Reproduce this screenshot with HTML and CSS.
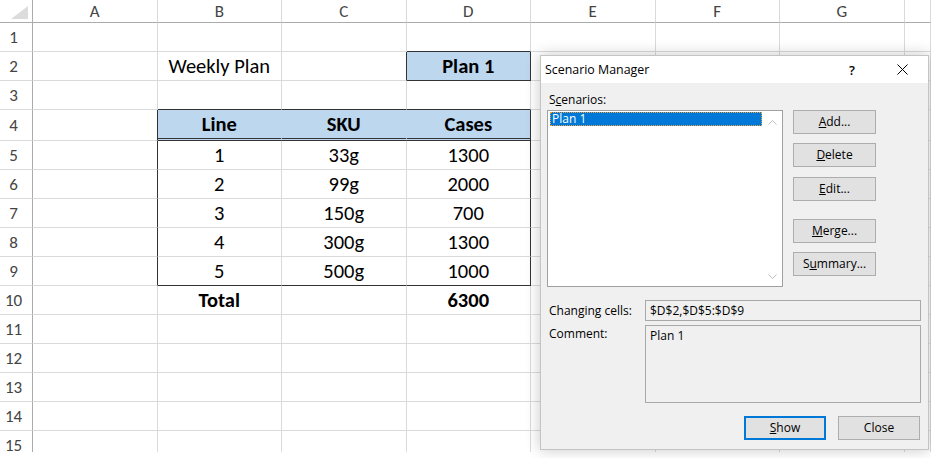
FILE: index.html
```html
<!DOCTYPE html>
<html>
<head>
<meta charset="utf-8">
<link rel="stylesheet" href="styles.css">
</head>
<body>
<div class="sheet">
  <div class="c corner"><svg width="32" height="22" viewBox="0 0 32 22"><polygon points="28,6 28,19 11,19" fill="#dcdcdc"/></svg></div>
  <div class="c ch">A</div><div class="c ch">B</div><div class="c ch">C</div><div class="c ch">D</div><div class="c ch">E</div><div class="c ch">F</div><div class="c ch">G</div><div class="c ch"></div>

  <div class="c rh">1</div><div class="c"></div><div class="c"></div><div class="c"></div><div class="c dk-b"></div><div class="c"></div><div class="c"></div><div class="c"></div><div class="c"></div>

  <div class="c rh">2</div><div class="c"></div><div class="c">Weekly Plan</div><div class="c dk-r"></div><div class="c fill b dk-r dk-b">Plan 1</div><div class="c"></div><div class="c"></div><div class="c"></div><div class="c"></div>

  <div class="c rh">3</div><div class="c"></div><div class="c dk-b"></div><div class="c dk-b"></div><div class="c dk-b"></div><div class="c"></div><div class="c"></div><div class="c"></div><div class="c"></div>

  <div class="c rh">4</div><div class="c dk-r"></div><div class="c hdr fill-r">Line</div><div class="c hdr fill-r">SKU</div><div class="c hdr dk-r">Cases</div><div class="c"></div><div class="c"></div><div class="c"></div><div class="c"></div>

  <div class="c rh">5</div><div class="c dk-r"></div><div class="c">1</div><div class="c">33g</div><div class="c dk-r">1300</div><div class="c"></div><div class="c"></div><div class="c"></div><div class="c"></div>

  <div class="c rh">6</div><div class="c dk-r"></div><div class="c">2</div><div class="c">99g</div><div class="c dk-r">2000</div><div class="c"></div><div class="c"></div><div class="c"></div><div class="c"></div>

  <div class="c rh">7</div><div class="c dk-r"></div><div class="c">3</div><div class="c">150g</div><div class="c dk-r">700</div><div class="c"></div><div class="c"></div><div class="c"></div><div class="c"></div>

  <div class="c rh">8</div><div class="c dk-r"></div><div class="c">4</div><div class="c">300g</div><div class="c dk-r">1300</div><div class="c"></div><div class="c"></div><div class="c"></div><div class="c"></div>

  <div class="c rh">9</div><div class="c dk-r"></div><div class="c dk-b">5</div><div class="c dk-b">500g</div><div class="c dk-r dk-b">1000</div><div class="c"></div><div class="c"></div><div class="c"></div><div class="c"></div>

  <div class="c rh">10</div><div class="c"></div><div class="c b">Total</div><div class="c"></div><div class="c b">6300</div><div class="c"></div><div class="c"></div><div class="c"></div><div class="c"></div>

  <div class="c rh">11</div><div class="c"></div><div class="c"></div><div class="c"></div><div class="c"></div><div class="c"></div><div class="c"></div><div class="c"></div><div class="c"></div>

  <div class="c rh">12</div><div class="c"></div><div class="c"></div><div class="c"></div><div class="c"></div><div class="c"></div><div class="c"></div><div class="c"></div><div class="c"></div>

  <div class="c rh">13</div><div class="c"></div><div class="c"></div><div class="c"></div><div class="c"></div><div class="c"></div><div class="c"></div><div class="c"></div><div class="c"></div>

  <div class="c rh">14</div><div class="c"></div><div class="c"></div><div class="c"></div><div class="c"></div><div class="c"></div><div class="c"></div><div class="c"></div><div class="c"></div>

  <div class="c rh">15</div><div class="c"></div><div class="c"></div><div class="c"></div><div class="c"></div><div class="c"></div><div class="c"></div><div class="c"></div><div class="c"></div>
</div>

<div class="dialog">
  <div class="titlebar">
    <span class="title">Scenario Manager</span>
    <span class="tbtn help">?</span>
    <span class="tbtn close"><svg width="11" height="11" viewBox="0 0 11 11"><path d="M0.5 0.5 L10.5 10.5 M10.5 0.5 L0.5 10.5" stroke="#000" stroke-width="1" fill="none"/></svg></span>
  </div>
  <div class="dbody">
    <div class="lbl">S<u>c</u>enarios:</div>
    <div class="top">
      <div class="listbox">
        <div class="items"><div class="item sel">Plan 1</div></div>
        <div class="scroll">
          <svg width="9" height="5" viewBox="0 0 9 5"><path d="M0.5 4.5 L4.5 0.5 L8.5 4.5" stroke="#bdbdbd" fill="none"/></svg>
          <svg width="9" height="5" viewBox="0 0 9 5"><path d="M0.5 0.5 L4.5 4.5 L8.5 0.5" stroke="#bdbdbd" fill="none"/></svg>
        </div>
      </div>
      <div class="btncol">
        <div class="btn"><u>A</u>dd...</div>
        <div class="btn g9"><u>D</u>elete</div>
        <div class="btn g10"><u>E</u>dit...</div>
        <div class="btn g18"><u>M</u>erge...</div>
        <div class="btn g9">S<u>u</u>mmary...</div>
      </div>
    </div>
    <div class="frow">
      <span class="flbl">Changing cells:</span>
      <div class="field">$D$2,$D$5:$D$9</div>
    </div>
    <div class="frow crow">
      <span class="flbl">Comment:</span>
      <div class="field comment">Plan 1</div>
    </div>
    <div class="actions">
      <div class="btn act primary"><u>S</u>how</div>
      <div class="btn act">Close</div>
    </div>
  </div>
</div>
</body>
</html>
```

FILE: styles.css
```css
html, body {
  margin: 0;
  padding: 0;
}
body {
  width: 931px;
  height: 458px;
  overflow: hidden;
  background: #ffffff;
  position: relative;
}

.sheet {
  display: grid;
  grid-template-columns: 33px repeat(7, 124.5px) 1fr;
  grid-template-rows: 23px repeat(3, 29px) 31px repeat(11, 29px);
  height: 452px;
  overflow: hidden;
  font-family: "Carlito", "Lato", sans-serif;
  font-size: 20.5px;
  color: #000;
}

.c {
  box-sizing: border-box;
  border-right: 1px solid #dadada;
  border-bottom: 1px solid #dadada;
  display: flex;
  align-items: center;
  justify-content: center;
  white-space: nowrap;
  min-width: 0;
}

.corner {
  border-right-color: #ababab;
  border-bottom-color: #ababab;
  align-items: flex-start;
  justify-content: flex-start;
}
.corner svg { display: block; }

.ch {
  font-size: 17px;
  color: #444;
  border-bottom-color: #ababab;
  padding-top: 1px;
}
.rh {
  font-size: 17px;
  color: #444;
  border-right-color: #ababab;
  padding-right: 5px;
}

.dk-r { border-right-color: #333; }
.dk-b { border-bottom-color: #333; }
.b { font-weight: 700; }
.fill { background: #bdd7ee; }
.hdr {
  background: #bdd7ee;
  font-weight: 700;
  border-bottom: 3px double #333;
}
.fill-r { border-right-color: #bdd7ee; }

/* Dialog */
.dialog {
  position: absolute;
  left: 540px;
  top: 55px;
  width: 389px;
  height: 395px;
  box-sizing: border-box;
  background: #f0f0f0;
  border: 1px solid #c4c4c4;
  box-shadow: 0 0 14px rgba(0, 0, 0, 0.22);
  font-family: "Open Sans", "Noto Sans", sans-serif;
  font-size: 12px;
  color: #000;
  display: flex;
  flex-direction: column;
}

.titlebar {
  height: 27px;
  background: #ffffff;
  display: flex;
  align-items: center;
  flex-shrink: 0;
}
.title {
  padding-left: 4px;
  flex: 1;
  line-height: 16px;
  font-size: 12.4px;
}
.tbtn {
  width: 46px;
  height: 27px;
  display: flex;
  align-items: center;
  justify-content: center;
}
.help {
  font-size: 13px;
  font-weight: 600;
  margin-right: 4px;
}
.close { margin-right: 3px; }
.close svg { display: block; }

.dbody {
  padding: 9px 7px 0 6px;
  display: flex;
  flex-direction: column;
}
.lbl {
  line-height: 16px;
  padding-left: 2px;
  margin-bottom: 2px;
}
u {
  text-decoration: underline;
  text-underline-offset: 1px;
}

.top {
  display: flex;
  align-items: flex-start;
}
.listbox {
  width: 236px;
  height: 177px;
  box-sizing: border-box;
  border: 1px solid #a0a0a0;
  background: #fff;
  display: flex;
}
.items {
  flex: 1;
  padding: 1px 0 0 2px;
}
.item {
  height: 14px;
  line-height: 14px;
  padding-left: 2px;
}
.sel {
  background: #0078d7;
  color: #fff;
  outline: 1px dotted #f0a040;
  outline-offset: -1px;
}
.scroll {
  width: 20px;
  display: flex;
  flex-direction: column;
  justify-content: space-between;
  align-items: center;
  padding: 9px 0 7px;
  box-sizing: border-box;
}
.scroll svg { display: block; }

.btncol {
  margin-left: 10px;
  display: flex;
  flex-direction: column;
}
.btn {
  width: 83px;
  height: 24px;
  box-sizing: border-box;
  background: #e1e1e1;
  border: 1px solid #adadad;
  display: flex;
  align-items: center;
  justify-content: center;
  line-height: 16px;
}
.g9 { margin-top: 9px; }
.g10 { margin-top: 10px; }
.g18 { margin-top: 18px; }

.frow {
  display: flex;
  align-items: center;
  margin-top: 13px;
}
.crow {
  margin-top: 4px;
  align-items: flex-start;
}
.flbl {
  width: 98px;
  padding-left: 2px;
  box-sizing: border-box;
  line-height: 16px;
}
.crow .flbl { padding-top: 1px; }
.field {
  width: 276px;
  height: 21px;
  box-sizing: border-box;
  border: 1px solid #a8a8a8;
  background: #f0f0f0;
  padding-left: 4px;
  line-height: 19px;
}
.comment {
  height: 78px;
  padding-top: 2px;
  line-height: 16px;
}

.actions {
  display: flex;
  justify-content: flex-end;
  gap: 12px;
  margin-top: 13px;
  padding-right: 1px;
}
.act { width: 82px; }
.primary {
  border: 2px solid #0078d7;
}
```
